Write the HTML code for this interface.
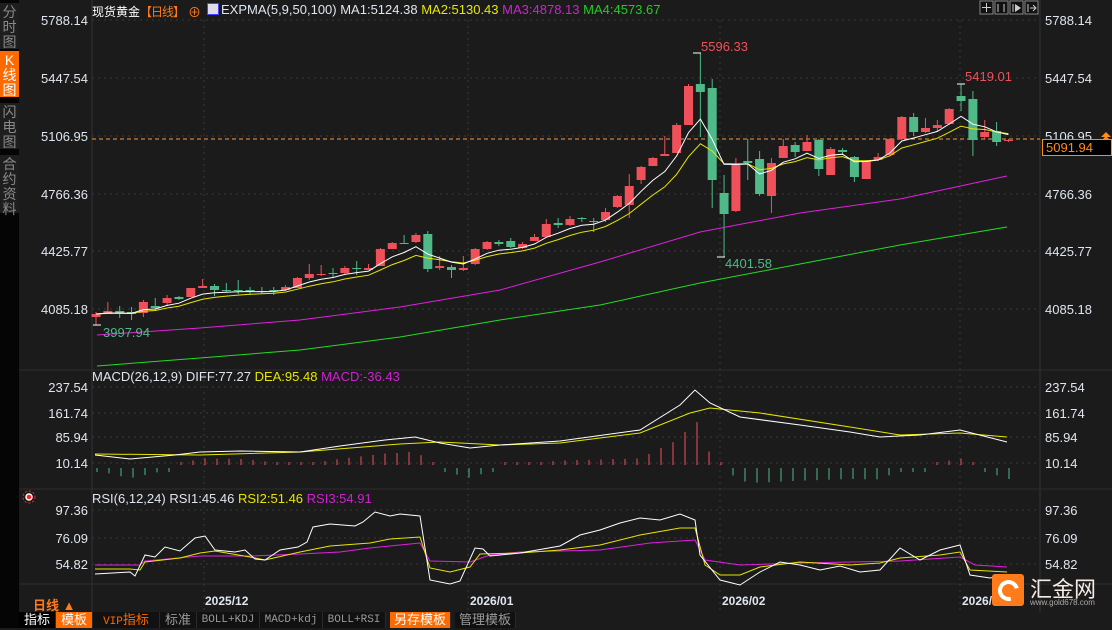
<!DOCTYPE html>
<html><head><meta charset="utf-8"><style>
*{margin:0;padding:0;box-sizing:border-box}
body{width:1112px;height:628px;background:#1b1b1b;overflow:hidden;font-family:"Liberation Sans","Noto Sans CJK SC",sans-serif;position:relative;color:#dfe6ee}
#sb{position:absolute;left:0;top:0;width:19px;height:628px;background:#050505}
.tab{position:absolute;left:0;width:19px;background:#1e1e1e;color:#8a8a8a;font-size:14px;line-height:15px;text-align:center;padding-top:2px}
.t{position:absolute;white-space:nowrap;font-size:13px}
.btm{position:absolute;top:612px;height:16px;font-size:13px;line-height:16px;text-align:center;color:#9a9a9a;background:#111;border-right:1px solid #2a2a2a}
.mono{font-family:"Liberation Mono",monospace;font-size:11px}
</style></head><body>
<div id="sb"></div>
<div class="tab" style="top:3px;height:46px">分<br>时<br>图</div>
<div class="tab" style="top:51px;height:46px;background:#ff6a00;color:#fff">K<br>线<br>图</div>
<div class="tab" style="top:103px;height:46px">闪<br>电<br>图</div>
<div class="tab" style="top:155px;height:58px">合<br>约<br>资<br>料</div>
<svg id="c" width="1112" height="628" style="position:absolute;left:0;top:0"></svg>
<div class="t" style="left:92px;top:3px;color:#fff;font-size:12px">现货黄金</div>
<div class="t" style="left:140px;top:3px;color:#ff7a1a;font-size:12px;letter-spacing:-1px">【日线】</div>
<div class="t" style="left:188px;top:2px;color:#ff7a1a;font-size:13px">⊕</div>
<div class="t" style="left:207px;top:3px;width:12px;height:12px;background:#dde;border:1px solid #44f"></div>
<div class="t" style="left:221px;top:2px;color:#dfe6ee">EXPMA(5,9,50,100) MA1:5124.38 <span style="color:#e6e600">MA2:5130.43</span> <span style="color:#d020d0">MA3:4878.13</span> <span style="color:#22cc22">MA4:4573.67</span></div>
<div class="t" style="left:92px;top:369px;color:#dfe6ee">MACD(26,12,9) DIFF:77.27 <span style="color:#e6e600">DEA:95.48</span> <span style="color:#d020d0">MACD:-36.43</span></div>
<div class="t" style="left:92px;top:491px;color:#dfe6ee">RSI(6,12,24) RSI1:45.46 <span style="color:#e6e600">RSI2:51.46</span> <span style="color:#d020d0">RSI3:54.91</span></div>
<div class="t" style="left:33px;top:595px;color:#ff7a1a;font-size:13px;font-weight:bold">日线 ▲</div>
<div class="t" style="left:205px;top:594px;font-weight:bold;font-size:12px">2025/12</div>
<div class="t" style="left:470px;top:594px;font-weight:bold;font-size:12px">2026/01</div>
<div class="t" style="left:722px;top:594px;font-weight:bold;font-size:12px">2026/02</div>
<div class="t" style="left:962px;top:594px;font-weight:bold;font-size:12px">2026/03</div>
<div class="btm" style="left:19px;width:37px;color:#fff;background:#000">指标</div>
<div class="btm" style="left:56px;width:37px;color:#fff;background:#ff6a00">模板</div>
<div class="btm" style="left:93px;width:67px;color:#ff6a00"><span class="mono">VIP</span>指标</div>
<div class="btm" style="left:160px;width:37px">标准</div>
<div class="btm mono" style="left:197px;width:63px">BOLL+KDJ</div>
<div class="btm mono" style="left:260px;width:63px">MACD+kdj</div>
<div class="btm mono" style="left:323px;width:63px">BOLL+RSI</div>
<div class="btm" style="left:390px;width:61px;color:#fff;background:#ff6a00">另存模板</div>
<div class="btm" style="left:455px;width:61px">管理模板</div>
<div style="position:absolute;left:992px;top:574px;width:32px;height:32px;background:#ff7a1a;border-radius:3px"></div>
<div style="position:absolute;left:998px;top:580px;width:21px;height:21px;border-radius:50%;border:4px solid #fff;border-right-color:transparent;transform:rotate(30deg)"></div>
<div class="t" style="left:1030px;top:572px;font-size:22px;color:#f4ece4">汇金网</div>
<div class="t" style="left:1030px;top:598px;font-size:8px;color:#aaa">www.gold678.com</div>
<div style="position:absolute;left:1042px;top:139px;width:70px;height:17px;border:1px solid #ff8c1a;background:#000;color:#ff8c1a;font-size:13px;line-height:15px;padding-left:3px">5091.94</div>
<script>
var S=document.getElementById('c'),h='';
function L(x1,y1,x2,y2,c,d,w){h+='<line x1="'+x1+'" y1="'+y1+'" x2="'+x2+'" y2="'+y2+'" stroke="'+c+'" stroke-width="'+(w||1)+'"'+(d?' stroke-dasharray="'+d+'"':'')+'/>';}
function P(pts,c){h+='<polyline fill="none" stroke="'+c+'" stroke-width="1" points="'+pts.map(function(p){return p[0]+','+p[1]}).join(' ')+'"/>';}
function T(x,y,s,c,a,fs){h+='<text x="'+x+'" y="'+y+'" fill="'+c+'" font-size="'+(fs||13)+'" text-anchor="'+(a||'start')+'" font-family="Liberation Sans">'+s+'</text>';}
L(92,0,92,612,'#333');L(1040,0,1040,612,'#333');
L(19,370,1112,370,'#2c2c2c');L(19,489,1112,489,'#2c2c2c');L(19,584,1112,584,'#2c2c2c');
var gy=[20,78,136,194,251,309],gl=['5788.14','5447.54','5106.95','4766.36','4425.77','4085.18'];
gy.forEach(function(y,i){L(92,y,1040,y,'#3a3a3a','2,4');T(88,y+5,gl[i],'#dfe6ee','end');T(1045,y+5,gl[i],'#dfe6ee');});
[[387,'237.54'],[413,'161.74'],[437,'85.94'],[463,'10.14']].forEach(function(a){L(92,a[0],1040,a[0],'#3a3a3a','2,4');T(88,a[0]+5,a[1],'#dfe6ee','end');T(1045,a[0]+5,a[1],'#dfe6ee');});
[[510,'97.36'],[538,'76.09'],[564,'54.82']].forEach(function(a){L(92,a[0],1040,a[0],'#3a3a3a','2,4');T(88,a[0]+5,a[1],'#dfe6ee','end');T(1045,a[0]+5,a[1],'#dfe6ee');});
[204,468,720,960].forEach(function(x){L(x,20,x,612,'#3a3a3a','2,4');});
L(92,139,1040,139,'#ff9933','4,3');
var C=[['r',314,317,312,325],['r',311,314,302,314],['g',311,313,306,318],['g',312,314,307,320],['r',302,313,300,317],['g',306,308,298,311],['r',298,303,295,306],['g',297,299,296,300],['r',288,297,288,297],['r',286,288,279,288],['g',286,290,284,296],['g',290,291,283,292],['g',290,291,280,294],['g',290,291,287,295],['g',291,292,287,294],['g',290,291,287,295],['r',287,290,285,291],['r',278,288,277,288],['r',274,278,264,280],['r',274,275,265,276],['g',273,274,268,278],['r',268,273,266,274],['g',268,269,261,275],['r',268,270,264,270],['r',249,266,248,266],['r',243,249,242,249],['g',243,244,235,244],['r',235,242,233,243],['g',234,269,231,272],['r',266,268,256,270],['g',267,270,265,278],['r',268,270,256,271],['r',249,264,248,265],['r',242,249,241,250],['g',242,244,240,246],['g',241,247,238,248],['r',244,248,242,249],['r',237,241,234,241],['r',224,237,219,237],['g',223,225,218,228],['r',219,225,216,226],['g',218,219,217,222],['g',221,222,218,232],['r',212,220,208,222],['r',196,207,195,208],['r',186,205,174,218],['r',167,180,166,184],['r',158,166,157,166],['r',154,156,136,154],['r',125,153,123,153],['r',86,125,84,125],['g',84,92,53,137],['g',88,180,79,208],['g',193,214,175,257],['r',165,211,158,212],['g',161,163,139,180],['g',159,194,151,196],['r',163,196,158,213],['r',146,158,139,158],['g',145,152,142,157],['r',142,151,135,151],['g',140,169,139,176],['r',149,175,147,175],['g',150,152,148,155],['g',157,177,156,182],['r',161,179,160,179],['r',157,160,153,161],['r',139,155,138,156],['r',117,139,116,140],['g',117,132,113,136],['r',128,132,118,133],['r',125,128,120,132],['r',109,124,108,125],['g',96,101,84,111],['g',99,140,91,156],['r',132,137,120,140],['g',131,142,122,146],['r',140,141,139,142]];
var e5=[],e9=[],a=null,b=null;
C.forEach(function(c,i){var x=96+i*11.85,col=c[0]=='r'?'#f0505a':'#4fba88';
L(x,c[3],x,c[4],col);h+='<rect x="'+(x-4.5)+'" y="'+c[1]+'" width="9" height="'+Math.max(1,c[2]-c[1])+'" fill="'+col+'"/>';
var cl=c[0]=='r'?c[1]:c[2];a=a==null?cl:a+(cl-a)*2/6;b=b==null?cl:b+(cl-b)*2/10;e5.push([x.toFixed(1),a.toFixed(1)]);e9.push([x.toFixed(1),b.toFixed(1)]);});
P([[97,335],[200,328],[300,320],[400,307],[500,290],[600,262],[700,232],[800,213],[900,199],[1007,176]],'#e020e0');
P([[97,366],[200,358],[300,350],[400,337],[500,320],[600,305],[700,283],[800,264],[900,245],[1007,227]],'#22dd22');
P(e9,'#e6e600');P(e5,'#ffffff');
L(693,53,701,53,'#fff');L(717,257,725,257,'#fff');L(957,84,965,84,'#fff');L(93,325,101,325,'#fff');
T(701,51,'5596.33','#f0505a','start',13);T(965,81,'5419.01','#f0505a','start',13);T(725,268,'4401.58','#4fba88','start',13);T(103,337,'3997.94','#4fba88','start',13);
var W=[[95,455],[130,459],[175,455],[200,452],[240,451],[300,452],[340,446],[385,440],[415,437],[440,443],[470,448],[500,445],[560,441],[640,430],[680,405],[695,390],[710,403],[740,417],[800,425],[850,432],[880,437],[920,435],[960,430],[1007,442]];
var Y=[[95,454],[200,455],[300,452],[400,444],[440,442],[500,445],[560,443],[640,433],[690,413],[710,408],[760,413],[850,427],[900,435],[960,433],[1007,437]];
function iv(A,x){for(var i=0;i<A.length-1;i++){if(x<=A[i+1][0])return A[i][1]+(A[i+1][1]-A[i][1])*(x-A[i][0])/(A[i+1][0]-A[i][0]);}return A[A.length-1][1];}
for(var x=97;x<=1010;x+=12){var d=(iv(Y,x)-iv(W,x))*2.2;if(d>0)L(x,465-Math.max(3,d),x,465,'#f0505a');else L(x,468,x,468+Math.max(4,-d),'#4fba88');}
P(Y,'#e6e600');P(W,'#ffffff');
P([[95,565],[140,565],[145,561],[200,556],[250,556],[300,554],[340,552],[370,548],[420,543],[430,561],[470,562],[490,555],[520,552],[600,550],[650,543],[695,540],[705,560],[740,565],[800,563],[900,561],[960,557],[975,565],[1007,567]],'#e020e0');
P([[95,569],[130,569],[140,570],[145,562],[180,558],[200,553],[215,551],[250,557],[265,560],[300,552],[330,546],[370,543],[390,539],[420,537],[430,568],[450,572],[470,567],[480,554],[520,553],[560,550],[600,545],[640,535],[680,528],[695,528],[705,565],[720,575],[740,575],[760,567],[800,562],[850,565],[880,563],[900,558],[940,555],[960,552],[970,570],[1007,572]],'#e6e600');
P([[95,574],[130,572],[135,576],[145,555],[155,557],[165,547],[180,551],[195,538],[205,536],[215,550],[235,552],[245,550],[255,559],[265,560],[280,550],[298,547],[307,542],[313,527],[330,524],[355,526],[363,522],[375,512],[390,516],[400,514],[420,516],[430,580],[450,584],[460,581],[475,548],[483,549],[490,556],[520,553],[560,546],[580,535],[600,530],[620,523],[640,518],[660,520],[680,514],[695,520],[700,555],[720,580],[740,585],[760,572],[780,562],[800,565],[820,570],[840,566],[860,572],[880,570],[900,548],[920,560],[940,550],[960,545],[970,575],[990,578],[1007,575]],'#ffffff');
h+='<circle cx="29" cy="497" r="3" fill="#f22" stroke="#fff" stroke-width="1.5"/><circle cx="29" cy="497" r="6" fill="none" stroke="#f22" stroke-dasharray="2,2"/>';
[980,995,1010,1025].forEach(function(x){h+='<rect x="'+x+'" y="1" width="13" height="13" fill="#111" stroke="#888"/>';});
L(986.5,3,986.5,12,'#ccc');L(982,7.5,991,7.5,'#ccc');L(998,4,998,12,'#ccc');L(1004,4,1004,12,'#ccc');L(1013,4,1013,12,'#ccc');h+='<path d="M1015 4 L1021 8 L1015 12Z" fill="#ccc"/>';L(1028,4,1028,12,'#ccc');h+='<path d="M1030 8 H1036 M1033 5 L1036 8 L1033 11" stroke="#ccc" fill="none"/>';
h+='<path d="M1101 137 L1106 132 L1111 137Z M1101 141 L1106 136 L1111 141Z" fill="#ff8c1a"/>';
S.innerHTML=h;
</script>
</body></html>
